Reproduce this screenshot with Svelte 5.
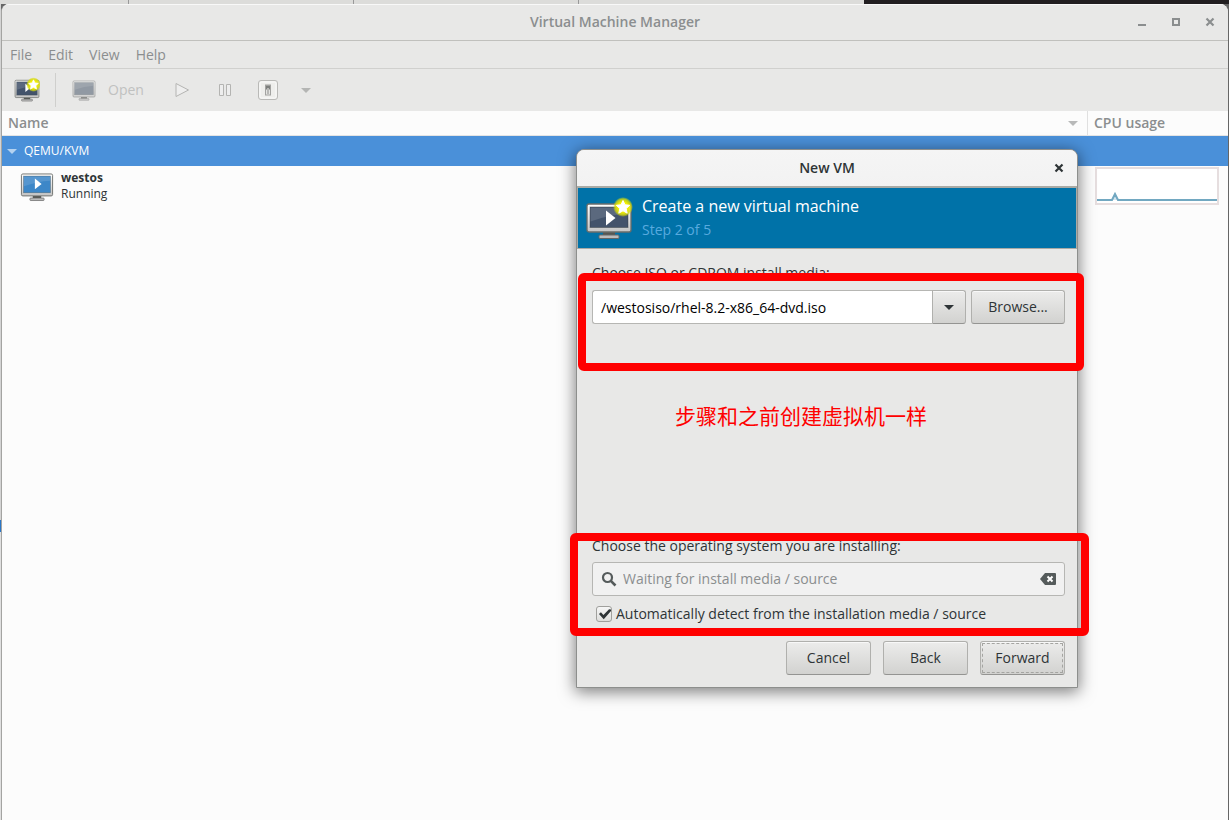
<script>
	let media = $state('/westosiso/rhel-8.2-x86_64-dvd.iso');
	let autodetect = $state(true);
	let os = $state('');

	const menus = ['File', 'Edit', 'View', 'Help'];
	const tabs = [128, 224, 224, 285];
	const load = [0, 0, 0, 0, 0, 0, 6, 0, 0, 0, 0, 0, 0, 0, 0, 0, 0, 0, 0, 0, 0, 0, 0, 0, 0, 0, 0, 0, 0, 0, 0, 0, 0, 0, 0, 0, 0, 0, 0, 0, 0];
	const points = load.map((v, i) => `${2 + i * 3},${33 - v}`).join(' ');
</script>

<svelte:head>
	<title>Virtual Machine Manager</title>
</svelte:head>

{#snippet monitor(size, top, screen, play, star)}
	<svg class="monitor" width={size} height={size} viewBox="0 0 48 48" aria-hidden="true">
		<defs>
			<linearGradient id="bezel" x1="0" y1="0" x2="0" y2="1">
				<stop offset="0" stop-color="#fff" />
				<stop offset="1" stop-color="#c4c4c4" />
			</linearGradient>
			<radialGradient id="glow">
				<stop offset="0.5" stop-color="#f4f000" />
				<stop offset="0.8" stop-color="#d8dc08" stop-opacity="0.8" />
				<stop offset="1" stop-color="#d8dc08" stop-opacity="0" />
			</radialGradient>
		</defs>
		<path d="M18 38h12v4H18z" fill="#555753" />
		<rect x="14" y="41" width="20" height="3.5" rx="1" fill="#bbb" stroke="#666" />
		<rect x="2" y={top} width="44" height={38 - top} rx="2" fill="url(#bezel)" stroke="#6a6c69" stroke-width="1.3" />
		<rect x="5" y={top + 3} width="38" height={30.5 - top} fill={screen} stroke="#2e3436" stroke-opacity="0.4" />
		<path d="M5.5 {top + 3.5}h37v6q-18 1-37 8z" fill="#fff" opacity="0.13" />
		{#if play}<path d="M21 {top + 6.5}v15l9.500-7.500z" fill="#fff" />{/if}
		{#if star}
			<g transform={star === 'big' ? 'translate(36 14) scale(1.35)' : 'translate(38 13)'}>
				<circle r="10" fill="url(#glow)" />
				<path d="M0-6.500l2 4.300 4.700.5-3.500 3.200 1 4.700-4.200-2.400-4.200 2.400 1-4.700-3.500-3.200 4.700-.5z" fill="#fff" stroke="#fff" stroke-linejoin="round" />
			</g>
		{/if}
	</svg>
{/snippet}

{#snippet cross()}
	<svg width="10" height="10" viewBox="0 0 10 10" aria-hidden="true">
		<path d="M1.500 1.500l7 7M8.500 1.500l-7 7" stroke="currentColor" stroke-width="2.200" />
	</svg>
{/snippet}

<div class="desktop">
	<div class="backdrop">
		{#each tabs as width}
			<span style="width: {width}px"></span>
		{/each}
	</div>

	<main class="manager">
		<header class="titlebar">
			<h1>Virtual Machine Manager</h1>
			<div class="controls">
				<button aria-label="Minimize">
					<svg width="10" height="10" viewBox="0 0 10 10"><path d="M1 8h8" stroke="currentColor" stroke-width="2" /></svg>
				</button>
				<button aria-label="Maximize">
					<svg width="10" height="10" viewBox="0 0 10 10"><path d="M2 2h6v6H2z" fill="none" stroke="currentColor" stroke-width="2" /></svg>
				</button>
				<button aria-label="Close">{@render cross()}</button>
			</div>
		</header>

		<nav class="menubar">
			{#each menus as name}
				<button>{name}</button>
			{/each}
		</nav>

		<div class="toolbar">
			<button class="create" aria-label="Create a new virtual machine">{@render monitor(26, 6, '#43536b', true, 'big')}</button>
			<button class="open">
				<span class="dim">{@render monitor(24, 6, '#64707f', false, null)}</span>
				Open
			</button>
			<button class="run" aria-label="Run">
				<svg width="16" height="16" viewBox="0 0 16 16"><path d="M2 1.500v13L14.500 8z" fill="#eee" stroke="#b4b4b2" /></svg>
			</button>
			<button class="pause" aria-label="Pause">
				<svg width="14" height="14" viewBox="0 0 14 14"><path d="M1.500 1.500h4v11h-4zM8.500 1.500h4v11h-4z" fill="#eee" stroke="#b4b4b2" /></svg>
			</button>
			<button class="power" aria-label="Shut down">
				<svg width="20" height="20" viewBox="0 0 20 20">
					<rect x="0.500" y="0.500" width="19" height="19" rx="2.500" fill="#eeeeec" stroke="#b9b9b7" />
					<rect x="2" y="2" width="16" height="16" rx="1.500" fill="none" stroke="#fafafa" />
					<rect x="7.500" y="5" width="5" height="10" fill="#e4e4e2" stroke="#a2a2a0" />
					<path d="M8 5.500h4v4H8z" fill="#7c7e7c" />
					<path d="M9 8h2v6H9z" fill="#b8b8b6" />
				</svg>
			</button>
			<button class="more" aria-label="Shut down options"><i class="arrow"></i></button>
		</div>

		<table>
			<thead>
				<tr>
					<th><div class="sort">Name <i class="arrow"></i></div></th>
					<th class="usage">CPU usage</th>
				</tr>
			</thead>
			<tbody>
				<tr class="selected">
					<td colspan="2"><div class="host"><i class="arrow"></i>QEMU/KVM</div></td>
				</tr>
				<tr>
					<td>
						<div class="guest">
							{@render monitor(34, 7, '#3d87c8', true, null)}
							<div><b>westos</b><br />Running</div>
						</div>
					</td>
					<td class="graph">
						<svg width="124" height="38" viewBox="0 0 124 38" role="img" aria-label="CPU usage of westos">
							<rect x="1" y="1" width="122" height="36" fill="#fff" stroke="#e6dedf" stroke-width="2" />
							<polyline {points} fill="#d5e6ef" stroke="#72a8c1" stroke-width="2" />
						</svg>
					</td>
				</tr>
			</tbody>
		</table>
	</main>

	<div class="dialog" role="dialog" aria-labelledby="dialog-title">
		<header>
			<h2 id="dialog-title">New VM</h2>
			<button class="close" aria-label="Close">{@render cross()}</button>
		</header>

		<div class="banner">
			{@render monitor(48, 10, '#43536b', true, 'small')}
			<div>
				<h3>Create a new virtual machine</h3>
				<p>Step 2 of 5</p>
			</div>
		</div>

		<form onsubmit={(e) => e.preventDefault()}>
			<section class="media">
				<label for="media">Choose ISO or CDROM install media:</label>
				<div class="row">
					<div class="combo">
						<input id="media" type="text" bind:value={media} />
						<button type="button" class="btn" aria-label="Recent media"><i class="arrow"></i></button>
					</div>
					<button type="button" class="btn browse">Browse...</button>
				</div>
			</section>

			<section class="system">
				<label for="os">Choose the operating system you are installing:</label>
				<div class="search">
					<svg width="16" height="16" viewBox="0 0 16 16" aria-hidden="true">
						<circle cx="6.500" cy="6.500" r="4.500" fill="none" stroke="#555b5b" stroke-width="2.200" />
						<path d="M9.800 9.800l4.700 4.700" stroke="#555b5b" stroke-width="2.600" />
					</svg>
					<input id="os" type="text" placeholder="Waiting for install media / source" bind:value={os} />
					<button type="button" aria-label="Clear" onclick={() => (os = '')}>
						<svg width="16" height="12" viewBox="0 0 16 12">
							<path d="M0 6l5-6h10q1 0 1 1v10q0 1-1 1H5z" fill="#555b5b" />
							<path d="M7.500 3.500l5 5M12.500 3.500l-5 5" stroke="#fff" stroke-width="2" />
						</svg>
					</button>
				</div>
				<label class="check"><input type="checkbox" bind:checked={autodetect} />Automatically detect from the installation media / source</label>
			</section>

			<footer>
				<button type="button" class="btn">Cancel</button>
				<button type="button" class="btn">Back</button>
				<button class="btn focus">Forward</button>
			</footer>
		</form>

		<div class="mark mark-media"></div>
		<p class="note">步骤和之前创建虚拟机一样</p>
		<div class="mark mark-system"></div>
	</div>
</div>

<style>
	:global(body) {
		margin: 0;
		overflow: hidden;
	}
	.desktop {
		position: relative;
		display: flex;
		flex-direction: column;
		box-sizing: border-box;
		height: 100vh;
		padding: 0 1px;
		background: linear-gradient(#d4d4d4 520px, #2a76c6 520px, #2a76c6 532px, #e0e0e0 532px) 0 0 / 1px 100% no-repeat #666;
		color: #2e3436;
		font: 14px/20px "Open Sans", "Noto Sans", sans-serif;
	}
	button, input {
		box-sizing: border-box;
		margin: 0;
		padding: 0;
		border: 0;
		background: none;
		color: inherit;
		font: inherit;
	}
	svg { display: block; }
	h1, h2, h3, p { margin: 0; }
	h1, h2 {
		font-size: 14px;
		font-weight: 600;
	}
	.arrow {
		display: block;
		border: 5px solid transparent;
		border-top-color: currentColor;
		border-bottom: 0;
	}

	.backdrop {
		display: flex;
		height: 4px;
		margin: 0 -1px;
		background: #211e20;
	}
	.backdrop span {
		border-right: 1px solid #999;
		background: #dcdcda;
	}
	.backdrop span:last-child { border: 0; }

	/* main window, unfocused */
	.manager {
		flex: 1;
		border-left: 1px solid #a4a4a2;
		border-radius: 8px 8px 0 0;
		background: #fcfcfc;
		color: #8b8e8f;
		overflow: hidden;
	}
	.titlebar {
		display: grid;
		grid-template-columns: 1fr auto 1fr;
		align-items: center;
		height: 36px;
		border-bottom: 1px solid #c0c0bd;
		background: #e8e8e7;
		box-shadow: inset 0 1px #f8f8f8;
	}
	.titlebar h1 { grid-column: 2; }
	.controls {
		display: flex;
		justify-content: flex-end;
		gap: 24px;
		padding-right: 13px;
	}
	.menubar {
		display: flex;
		gap: 16px;
		height: 27px;
		padding: 0 8px;
		border-bottom: 1px solid #d0d0ce;
		background: #e8e8e7;
	}
	.toolbar {
		display: flex;
		align-items: center;
		height: 42px;
		background: #e8e8e7;
		color: #c0c1c0;
	}
	.create {
		height: 34px;
		padding: 0 15px 0 12px;
		border-right: 1px solid #cfcfcd;
	}
	.open {
		display: flex;
		align-items: center;
		gap: 12px;
		margin-left: 16px;
	}
	.dim { opacity: 0.65; }
	.run { margin-left: 30px; }
	.pause { margin-left: 28px; }
	.power { margin-left: 26px; }
	.more { margin-left: 23px; }
	.more .arrow { color: #b4b5b4; }

	table {
		width: 100%;
		border-collapse: collapse;
		table-layout: fixed;
	}
	th, td {
		padding: 0;
		text-align: left;
		vertical-align: top;
	}
	th {
		height: 24px;
		padding: 0 6px;
		border-bottom: 1px solid #e4e4e4;
		font-weight: 600;
		line-height: 24px;
	}
	.usage {
		width: 128px;
		border-left: 1px solid #e0e0e0;
	}
	.sort {
		display: flex;
		justify-content: space-between;
		align-items: center;
		padding-right: 3px;
	}
	.sort .arrow { color: #b8b9b9; }
	.selected {
		background: #4a90d9;
		color: #fff;
	}
	.host, .guest {
		display: flex;
		align-items: center;
		gap: 7px;
		font-size: 12px;
	}
	.host {
		height: 30px;
		padding-left: 5px;
	}
	.host .arrow { color: #b4d2f0; }
	.guest {
		height: 40px;
		padding-left: 18px;
		color: #2e3436;
		line-height: 16px;
	}
	.graph { padding: 1px 7px; }

	/* wizard */
	.dialog {
		position: absolute;
		top: 149px;
		left: 576px;
		width: 500px;
		border: 1px solid #8d8f8d;
		border-radius: 8px 8px 0 0;
		background: #e8e8e7;
		box-shadow: 0 3px 16px 1px rgba(0, 0, 0, 0.5);
	}
	.dialog header {
		display: grid;
		grid-template-columns: 1fr auto 1fr;
		align-items: center;
		height: 36px;
		border-bottom: 2px solid #a9aaa5;
		border-radius: 7px 7px 0 0;
		background: linear-gradient(#f5f5f5, #f2f2f2);
	}
	.dialog h2 { grid-column: 2; }
	.close {
		justify-self: end;
		margin-right: 13px;
	}
	.banner {
		display: flex;
		align-items: center;
		gap: 9px;
		height: 60px;
		padding-left: 7px;
		border: 1px solid #a9aaa5;
		border-top: 0;
		background: #0072a8;
		color: #fff;
	}
	.banner h3 {
		font-size: 16px;
		font-weight: normal;
		line-height: 24px;
	}
	.banner p {
		color: #58aadf;
		line-height: 24px;
	}
	form { padding: 14px 12px 12px 15px; }
	label { display: block; }
	.media { min-height: 273px; }
	.row {
		display: flex;
		gap: 5px;
		margin-top: 7px;
	}
	.combo {
		flex: 1;
		display: flex;
	}
	.combo input {
		flex: 1;
		min-width: 0;
		height: 34px;
		padding: 0 8px;
		border: 1px solid #b6b6b3;
		border-right: 0;
		border-radius: 3px 0 0 3px;
		background: #fff;
		color: #000;
	}
	.btn {
		display: grid;
		place-items: center;
		height: 34px;
		border: 1px solid #b0b0ad;
		border-bottom-color: #949492;
		border-radius: 3px;
		background: linear-gradient(#ececeb, #d2d2d0);
		box-shadow: inset 0 1px #f8f8f8;
	}
	.combo .btn {
		width: 34px;
		border-radius: 0 3px 3px 0;
	}
	.browse { width: 94px; }
	.search {
		display: flex;
		align-items: center;
		gap: 6px;
		height: 32px;
		margin: 6px 0 8px;
		padding: 0 8px;
		border: 1px solid #b6b6b3;
		border-radius: 3px;
		background: #f1f1f1;
	}
	.search input {
		flex: 1;
		min-width: 0;
	}
	.search input::placeholder { color: #8b8e8f; }
	.check {
		display: flex;
		align-items: center;
		gap: 4px;
		padding-left: 4px;
	}
	.check input {
		appearance: none;
		position: relative;
		width: 16px;
		height: 16px;
		border: 1px solid #a0a09d;
		border-radius: 3px;
		background: linear-gradient(#f6f6f6, #dededc);
	}
	.check input:checked::after {
		content: "";
		position: absolute;
		inset: 0;
		background: #2e3436;
		clip-path: polygon(14% 50%, 28% 38%, 46% 58%, 86% 16%, 100% 18%, 100% 28%, 48% 88%);
	}
	footer {
		display: flex;
		justify-content: flex-end;
		gap: 12px;
		margin-top: 17px;
	}
	footer .btn { width: 85px; }
	.focus {
		outline: 1px dashed #a4a4a1;
		outline-offset: -3px;
	}

	/* red annotations over the wizard */
	.mark {
		position: absolute;
		border: 8px solid #f00;
		border-radius: 6px;
		pointer-events: none;
	}
	.mark-media {
		top: 123px;
		left: 1px;
		right: -7px;
		height: 82px;
	}
	.mark-system {
		top: 383px;
		left: -7px;
		right: -12px;
		height: 87px;
	}
	.note {
		position: absolute;
		top: 249px;
		left: 98px;
		color: #f00;
		font: 21px/32px "Noto Sans CJK SC", sans-serif;
	}
</style>
